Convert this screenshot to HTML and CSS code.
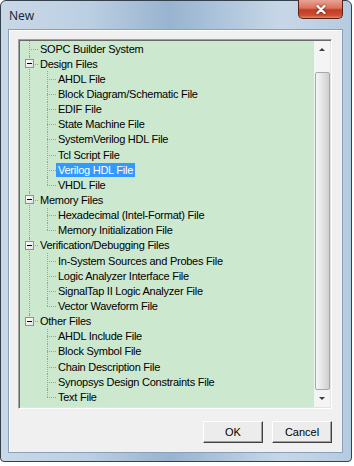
FILE: index.html
```html
<!DOCTYPE html>
<html lang="en">
<head>
    <meta charset="UTF-8">
    <title>New</title>
    <link rel="stylesheet" href="styles.css">
</head>
<body>
    <div class="window">
        <div class="title-bar">
            <span class="title">New</span>
            <button class="close-button">
                <svg width="10" height="9" viewBox="0 0 10 9"><path d="M1.5 1 L8.5 8 M8.5 1 L1.5 8" stroke="#ffffff" stroke-width="2.2" stroke-linecap="round"/></svg>
            </button>
        </div>
        <div class="client">
            <div class="tree-box">
                <div class="tree">
                    <div class="group">
                        <div class="row root-row"><span class="label">SOPC Builder System</span></div>
                    </div>
                    <div class="group">
                        <div class="row root-row"><span class="toggle"></span><span class="label">Design Files</span></div>
                        <div class="children">
                            <div class="row child-row"><span class="label">AHDL File</span></div>
                            <div class="row child-row"><span class="label">Block Diagram/Schematic File</span></div>
                            <div class="row child-row"><span class="label">EDIF File</span></div>
                            <div class="row child-row"><span class="label">State Machine File</span></div>
                            <div class="row child-row"><span class="label">SystemVerilog HDL File</span></div>
                            <div class="row child-row"><span class="label">Tcl Script File</span></div>
                            <div class="row child-row"><span class="label selected">Verilog HDL File</span></div>
                            <div class="row child-row"><span class="label">VHDL File</span></div>
                        </div>
                    </div>
                    <div class="group">
                        <div class="row root-row"><span class="toggle"></span><span class="label">Memory Files</span></div>
                        <div class="children">
                            <div class="row child-row"><span class="label">Hexadecimal (Intel-Format) File</span></div>
                            <div class="row child-row"><span class="label">Memory Initialization File</span></div>
                        </div>
                    </div>
                    <div class="group">
                        <div class="row root-row"><span class="toggle"></span><span class="label">Verification/Debugging Files</span></div>
                        <div class="children">
                            <div class="row child-row"><span class="label">In-System Sources and Probes File</span></div>
                            <div class="row child-row"><span class="label">Logic Analyzer Interface File</span></div>
                            <div class="row child-row"><span class="label">SignalTap II Logic Analyzer File</span></div>
                            <div class="row child-row"><span class="label">Vector Waveform File</span></div>
                        </div>
                    </div>
                    <div class="group">
                        <div class="row root-row"><span class="toggle"></span><span class="label">Other Files</span></div>
                        <div class="children">
                            <div class="row child-row"><span class="label">AHDL Include File</span></div>
                            <div class="row child-row"><span class="label">Block Symbol File</span></div>
                            <div class="row child-row"><span class="label">Chain Description File</span></div>
                            <div class="row child-row"><span class="label">Synopsys Design Constraints File</span></div>
                            <div class="row child-row"><span class="label">Text File</span></div>
                        </div>
                    </div>
                </div>
                <div class="scrollbar">
                    <div class="scroll-button"><span class="arrow-up"></span></div>
                    <div class="scroll-track">
                        <div class="scroll-thumb"></div>
                    </div>
                    <div class="scroll-button"><span class="arrow-down"></span></div>
                </div>
            </div>
            <div class="buttons">
                <button class="dialog-button">OK</button>
                <button class="dialog-button">Cancel</button>
            </div>
        </div>
    </div>
</body>
</html>
```

FILE: styles.css
```css
* {
    box-sizing: border-box;
}
body {
    margin: 0;
    background-color: #ffffff;
    font-family: 'Liberation Sans', Arial, sans-serif;
    color: #000000;
}
.window {
    width: 352px;
    height: 462px;
    display: flex;
    flex-direction: column;
    padding: 0 8px 8px 7px;
    border: 1px solid #34404c;
    border-radius: 6px 6px 4px 4px;
    background: linear-gradient(to right, #c9d8e7 0%, #bccfe2 25%, #98b4cf 48%, #a9c1d9 60%, #c8d7e7 80%, #b5cbe0 100%);
}
.title-bar {
    height: 28px;
    display: flex;
    align-items: center;
}
.title {
    margin-left: 1px;
    font-family: 'Noto Sans', 'Liberation Sans', sans-serif;
    font-size: 12px;
    color: #1e2a36;
}
.close-button {
    margin-left: auto;
    align-self: flex-start;
    margin-top: -1px;
    width: 45px;
    height: 19px;
    padding: 0;
    display: flex;
    align-items: center;
    justify-content: center;
    border: 1px solid #5a2018;
    border-top: none;
    border-radius: 0 0 5px 5px;
    background: linear-gradient(to bottom, #e9a494 0%, #d9725c 45%, #c23b22 55%, #cc4e32 85%, #e08a66 100%);
}
.close-button svg {
    filter: drop-shadow(0 0 1px #5a2018);
}
.client {
    flex: 1;
    display: flex;
    flex-direction: column;
    padding: 9px 10px 9px 9px;
    background-color: #f0f0f0;
    border: 1px solid #8aa0b8;
    box-shadow: inset 1px 1px 0 #ffffff;
}
.tree-box {
    height: 370px;
    display: flex;
    border-top: 1px solid #a0a0a0;
    border-left: 1px solid #a0a0a0;
    border-right: 1px solid #ffffff;
    border-bottom: 1px solid #ffffff;
    box-shadow: inset 1px 1px 0 #696969, inset -1px -1px 0 #e3e3e3;
    padding: 1px;
}
.tree {
    flex: 1;
    overflow: hidden;
    background-color: #cce8cf;
    font-size: 11px;
    letter-spacing: -0.25px;
}
.group {
    position: relative;
}
.group::before {
    content: '';
    position: absolute;
    left: 9px;
    top: 0;
    bottom: 0;
    border-left: 1px dotted #a0a0a0;
}
.group:last-child::before {
    bottom: auto;
    height: 8px;
}
.row {
    position: relative;
    height: 15.15px;
    display: flex;
    align-items: center;
}
.root-row {
    padding-left: 18px;
}
.root-row::before {
    content: '';
    position: absolute;
    left: 9px;
    width: 9px;
    top: 50%;
    border-top: 1px dotted #a0a0a0;
}
.child-row {
    padding-left: 36px;
}
.child-row::before {
    content: '';
    position: absolute;
    left: 27px;
    width: 9px;
    top: 50%;
    border-top: 1px dotted #a0a0a0;
}
.child-row::after {
    content: '';
    position: absolute;
    left: 27px;
    top: 0;
    bottom: 0;
    border-left: 1px dotted #a0a0a0;
}
.child-row:last-child::after {
    bottom: 50%;
}
.toggle {
    position: absolute;
    left: 5px;
    top: 3px;
    width: 9px;
    height: 9px;
    border: 1px solid #919191;
    background: linear-gradient(to bottom right, #ffffff, #e2e2e2);
    z-index: 1;
}
.toggle::after {
    content: '';
    position: absolute;
    left: 1px;
    top: 3px;
    width: 5px;
    height: 1px;
    background-color: #000000;
}
.label {
    position: relative;
    padding: 0 2px;
    line-height: 14px;
    white-space: nowrap;
}
.label.selected {
    background-color: #3399ff;
    color: #ffffff;
}
.scrollbar {
    width: 16px;
    display: flex;
    flex-direction: column;
    background-color: #f4f4f4;
}
.scroll-button {
    height: 17px;
    display: flex;
    align-items: center;
    justify-content: center;
}
.scroll-track {
    flex: 1;
    display: flex;
    flex-direction: column;
    justify-content: flex-end;
    padding-top: 14px;
}
.scroll-thumb {
    flex: 1;
    margin: 0 0 0 1px;
    border: 1px solid #a8a8a8;
    border-radius: 2px;
    background: linear-gradient(to right, #f6f6f6, #e4e4e4 50%, #cfcfcf);
}
.arrow-up {
    width: 0;
    height: 0;
    border-left: 3px solid transparent;
    border-right: 3px solid transparent;
    border-bottom: 3px solid #3c3c3c;
}
.arrow-down {
    width: 0;
    height: 0;
    border-left: 3px solid transparent;
    border-right: 3px solid transparent;
    border-top: 3px solid #3c3c3c;
}
.buttons {
    display: flex;
    justify-content: flex-end;
    gap: 9px;
    margin-top: 12px;
}
.dialog-button {
    width: 60px;
    height: 22px;
    padding: 0;
    font-family: 'Liberation Sans', Arial, sans-serif;
    font-size: 11px;
    color: #000000;
    background-color: #ececec;
    border-top: 1px solid #ffffff;
    border-left: 1px solid #ffffff;
    border-right: 1px solid #404040;
    border-bottom: 1px solid #404040;
    box-shadow: inset -1px -1px 0 #a0a0a0;
}
```
